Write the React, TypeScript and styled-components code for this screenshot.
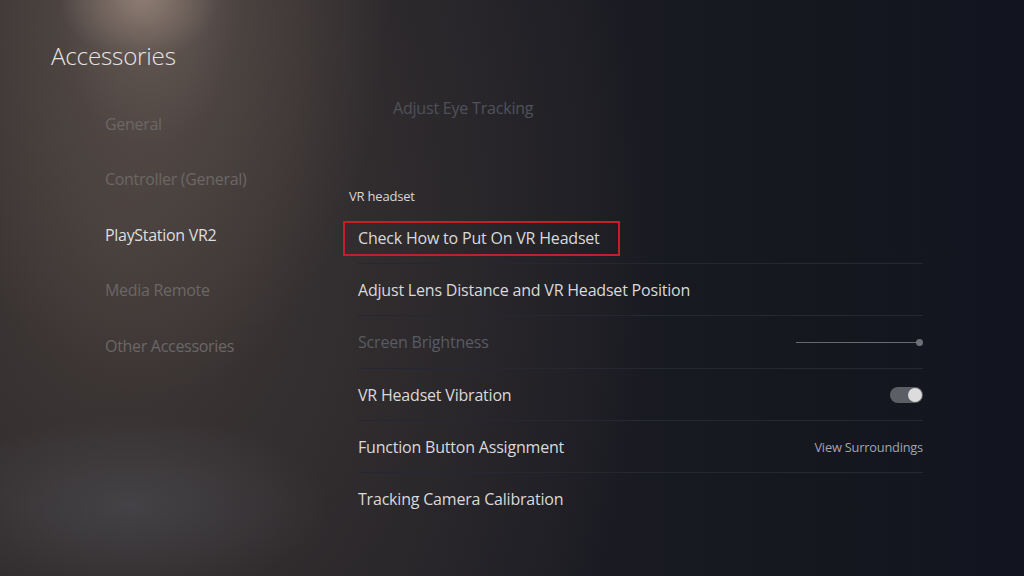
import React from "react";
import styled, { createGlobalStyle } from "styled-components";

const Global = createGlobalStyle`
  html, body { margin: 0; padding: 0; background: #15171f; }
  body { font-family: "Open Sans", "Noto Sans", sans-serif; }
  * { box-sizing: border-box; }
`;

const Screen = styled.div`
  position: relative;
  width: 1024px;
  height: 576px;
  overflow: hidden;
  display: flex;
  background:
    radial-gradient(ellipse 80px 60px at 140px 0px, rgba(170,150,138,0.55) 0%, rgba(170,150,138,0) 100%),
    radial-gradient(ellipse 240px 420px at 150px -20px, rgba(135,118,108,0.65) 0%, rgba(110,96,88,0.38) 40%, rgba(80,70,66,0) 100%),
    radial-gradient(ellipse 200px 90px at 130px 505px, rgba(78,78,84,0.6) 0%, rgba(60,60,66,0) 100%),
    radial-gradient(ellipse 540px 760px at 120px 240px, rgba(64,57,55,1) 0%, rgba(52,47,48,0.85) 45%, rgba(30,31,38,0) 100%),
    linear-gradient(90deg, #2c282a 0%, #1e1e25 45%, #16181f 75%, #121520 100%);
`;

const Sidebar = styled.div`
  width: 343px;
  flex: none;
  padding: 39px 0 0 51px;
  display: flex;
  flex-direction: column;
`;

const Title = styled.h1`
  margin: 0;
  font-family: "Open Sans", sans-serif;
  font-weight: 300;
  font-size: 24.2px;
  line-height: 34px;
  color: #e6e4e2;
  letter-spacing: -0.2px;
`;

const Nav = styled.nav`
  margin-top: 23px;
  padding-left: 54px;
  display: flex;
  flex-direction: column;
`;

const NavItem = styled.div<{ $active?: boolean }>`
  height: 55.5px;
  display: flex;
  align-items: center;
  font-family: "Open Sans", sans-serif;
  font-size: 16px;
  letter-spacing: -0.3px;
  color: ${(p) => (p.$active ? "#dedede" : "#6b6766")};
`;

const Content = styled.div`
  width: 580px;
  flex: none;
  padding-top: 98px;
  display: flex;
  flex-direction: column;
`;

const FadedItem = styled.div`
  margin-left: 50px;
  height: 20px;
  line-height: 20px;
  font-size: 16px;
  letter-spacing: -0.2px;
  color: #4f525b;
`;

const SectionLabel = styled.div`
  margin-top: 70px;
  margin-left: 6px;
  height: 16px;
  line-height: 16px;
  font-size: 13px;
  color: #d8d8d8;
  letter-spacing: -0.2px;
`;

const List = styled.div`
  margin-top: 8px;
  display: flex;
  flex-direction: column;
`;

const Row = styled.div<{ $last?: boolean }>`
  position: relative;
  height: 52.2px;
  display: flex;
  align-items: center;
  justify-content: space-between;
  padding-left: 15px;
  &::after {
    content: "";
    display: ${(p) => (p.$last ? "none" : "block")};
    position: absolute;
    left: 15px;
    right: 0;
    bottom: 0;
    height: 1px;
    background: #262831;
  }
`;

const Label = styled.span<{ $dim?: boolean }>`
  font-size: 16px;
  letter-spacing: -0.2px;
  color: ${(p) => (p.$dim ? "#585b63" : "#d9d9db")};
  white-space: nowrap;
`;

const FocusBox = styled.div`
  position: absolute;
  left: 0;
  top: 9px;
  width: 277px;
  height: 35px;
  border-width: 2px;
  border-style: solid;
  border-color: rgb(196, 30, 40);
  pointer-events: none;
`;

const Value = styled.span`
  font-size: 12.8px;
  letter-spacing: -0.2px;
  color: #a3a4aa;
`;

const Slider = styled.div`
  width: 127px;
  height: 8px;
  display: flex;
  align-items: center;
  &::before {
    content: "";
    flex: 1;
    height: 1.5px;
    background: #686a71;
  }
  &::after {
    content: "";
    width: 7px;
    height: 7px;
    border-radius: 50%;
    background: #6e7077;
    margin-left: -3px;
  }
`;

const Toggle = styled.div`
  width: 33px;
  height: 16px;
  border-radius: 8px;
  background: #5c5e65;
  display: flex;
  align-items: center;
  justify-content: flex-end;
  padding-right: 1px;
  &::after {
    content: "";
    width: 14px;
    height: 14px;
    border-radius: 50%;
    background: #dcdcdc;
  }
`;

const navItems = [
  "General",
  "Controller (General)",
  "PlayStation VR2",
  "Media Remote",
  "Other Accessories",
];

export default function App() {
  return (
    <Screen>
      <Global />
      <Sidebar>
        <Title>Accessories</Title>
        <Nav>
          {navItems.map((n) => (
            <NavItem key={n} $active={n === "PlayStation VR2"}>
              {n}
            </NavItem>
          ))}
        </Nav>
      </Sidebar>
      <Content>
        <FadedItem>Adjust Eye Tracking</FadedItem>
        <SectionLabel>VR headset</SectionLabel>
        <List>
          <Row>
            <Label>Check How to Put On VR Headset</Label>
            <FocusBox />
          </Row>
          <Row>
            <Label>Adjust Lens Distance and VR Headset Position</Label>
          </Row>
          <Row>
            <Label $dim>Screen Brightness</Label>
            <Slider />
          </Row>
          <Row>
            <Label>VR Headset Vibration</Label>
            <Toggle />
          </Row>
          <Row>
            <Label>Function Button Assignment</Label>
            <Value>View Surroundings</Value>
          </Row>
          <Row $last>
            <Label>Tracking Camera Calibration</Label>
          </Row>
        </List>
      </Content>
    </Screen>
  );
}
